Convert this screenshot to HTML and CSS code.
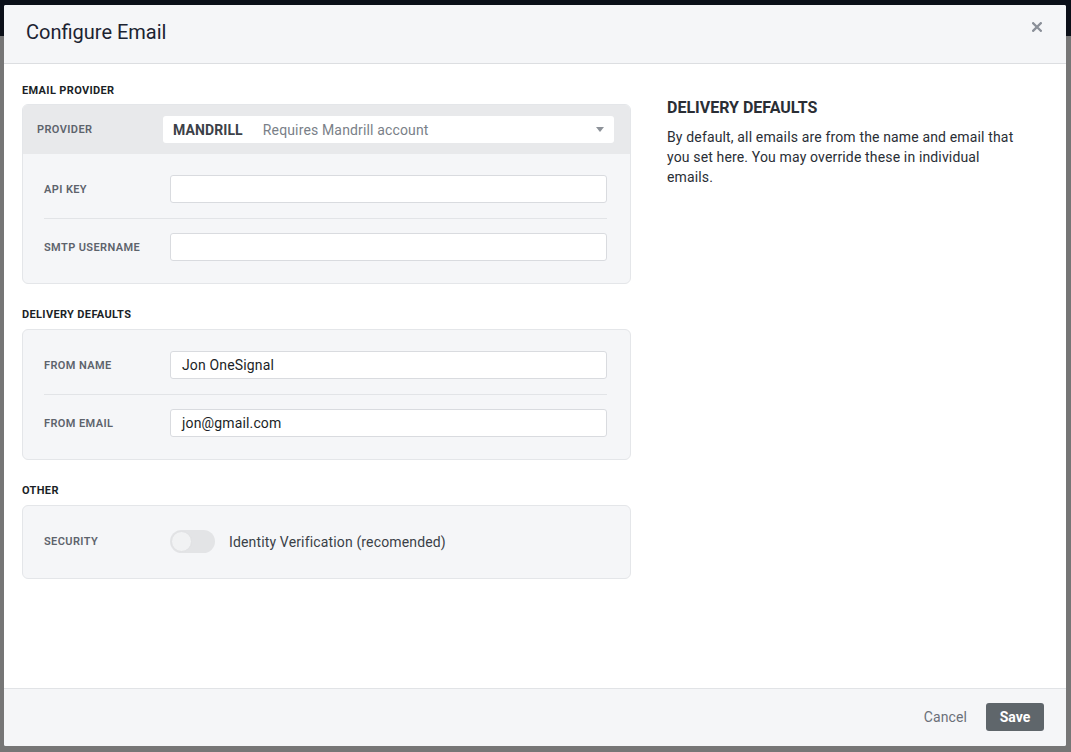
FILE: index.html
```html
<!DOCTYPE html>
<html>
<head>
<meta charset="utf-8">
<link rel="stylesheet" href="styles.css">
</head>
<body>
<div class="modal">
  <div class="modal-header">
    <h1 class="modal-title">Configure Email</h1>
    <button class="close" aria-label="Close">
      <svg width="10" height="10" viewBox="0 0 10 10"><path d="M1.2 1.2 L8.8 8.8 M8.8 1.2 L1.2 8.8" stroke="#8b9099" stroke-width="2.3" stroke-linecap="square"/></svg>
    </button>
  </div>
  <div class="modal-body">
    <div class="left-col">
      <div class="section-title">Email Provider</div>
      <div class="box">
        <div class="provider-row">
          <div class="label">Provider</div>
          <div class="select">
            <span class="select-main">MANDRILL</span>
            <span class="select-sub">Requires Mandrill account</span>
            <span class="caret"></span>
          </div>
        </div>
        <div class="rows">
          <div class="row">
            <div class="label">API Key</div>
            <div class="input"></div>
          </div>
          <div class="row">
            <div class="label">SMTP Username</div>
            <div class="input"></div>
          </div>
        </div>
      </div>

      <div class="section-title spaced">Delivery Defaults</div>
      <div class="box">
        <div class="rows">
          <div class="row">
            <div class="label">From Name</div>
            <div class="input">Jon OneSignal</div>
          </div>
          <div class="row">
            <div class="label">From Email</div>
            <div class="input">jon@gmail.com</div>
          </div>
        </div>
      </div>

      <div class="section-title spaced">Other</div>
      <div class="box">
        <div class="rows">
          <div class="row">
            <div class="label">Security</div>
            <div class="toggle-wrap">
              <span class="toggle"><span class="knob"></span></span>
              <span class="toggle-text">Identity Verification (recomended)</span>
            </div>
          </div>
        </div>
      </div>
    </div>
    <div class="right-col">
      <h2 class="side-title">DELIVERY DEFAULTS</h2>
      <p class="side-text">By default, all emails are from the name and email that you set here. You may override these in individual emails.</p>
    </div>
  </div>
  <div class="modal-footer">
    <button class="btn-cancel">Cancel</button>
    <button class="btn-save">Save</button>
  </div>
</div>
</body>
</html>
```

FILE: styles.css
```css
* { box-sizing: border-box; }
html, body { margin: 0; padding: 0; }
body {
  width: 1071px;
  height: 752px;
  overflow: hidden;
  font-family: Roboto, "Liberation Sans", sans-serif;
  background: linear-gradient(#0b1019 0, #0b1019 36px, #767676 36px);
}
.modal {
  margin: 5px 0 0 4px;
  width: 1062px;
  height: 741px;
  background: #ffffff;
  border-radius: 2px;
  display: flex;
  flex-direction: column;
  overflow: hidden;
}
.modal-header {
  height: 59px;
  flex: none;
  background: #f5f6f8;
  border-bottom: 1px solid #dcdee1;
  display: flex;
  align-items: center;
  justify-content: space-between;
  padding: 0 24px 4px 22px;
}
.modal-title {
  margin: 0;
  font-size: 20px;
  font-weight: 400;
  color: #1c2331;
}
.close {
  border: 0;
  background: none;
  padding: 0;
  margin: -10px 0 0 0;
  width: 10px;
  height: 10px;
  display: flex;
}
.modal-body {
  flex: 1;
  display: flex;
  padding: 20px 18px 0 18px;
}
.left-col {
  width: 609px;
  flex: none;
}
.section-title {
  font-size: 11px;
  line-height: 14px;
  font-weight: 700;
  letter-spacing: 0.35px;
  text-transform: uppercase;
  color: #1b1f27;
  margin-bottom: 6px;
}
.section-title.spaced { margin-top: 24px; margin-bottom: 7px; }
.box {
  background: #f5f6f8;
  border: 1px solid #e4e6e9;
  border-radius: 6px;
  overflow: hidden;
}
.provider-row {
  background: #e8e9eb;
  display: flex;
  align-items: center;
  padding: 11px 16px 11px 14px;
}
.label {
  width: 126px;
  flex: none;
  font-size: 11px;
  font-weight: 600;
  letter-spacing: 0.4px;
  text-transform: uppercase;
  color: #5d636c;
}
.select {
  flex: 1;
  height: 27px;
  background: #ffffff;
  border-radius: 3px;
  display: flex;
  align-items: center;
  padding: 0 10px;
  position: relative;
}
.select-main {
  font-size: 14px;
  font-weight: 700;
  letter-spacing: 0.1px;
  color: #3c4148;
  margin-right: 20px;
}
.select-sub {
  font-size: 14px;
  letter-spacing: 0.15px;
  color: #7a7f88;
}
.caret {
  position: absolute;
  right: 10px;
  top: 11px;
  width: 0;
  height: 0;
  border-left: 4.5px solid transparent;
  border-right: 4.5px solid transparent;
  border-top: 5px solid #8d9299;
}
.rows {
  padding: 7px 23px 7px 21px;
}
.row {
  display: flex;
  align-items: center;
  padding: 14px 0 15px 0;
}
.row + .row {
  border-top: 1px solid #e2e4e7;
}
.input {
  flex: 1;
  height: 28px;
  background: #ffffff;
  border: 1px solid #d9dbdf;
  border-radius: 3px;
  padding: 0 11px;
  font-size: 14px;
  letter-spacing: 0.15px;
  line-height: 26px;
  color: #1b1f27;
}
.toggle-wrap {
  display: flex;
  align-items: center;
  height: 29px;
}
.toggle {
  width: 45px;
  height: 23px;
  border-radius: 12px;
  background: #e3e4e6;
  display: flex;
  align-items: center;
  padding: 0 1px;
  margin-right: 14px;
}
.knob {
  width: 21px;
  height: 21px;
  border-radius: 50%;
  background: #f1f2f3;
  border: 1px solid #e0e1e3;
}
.toggle-text {
  font-size: 14px;
  letter-spacing: 0.15px;
  color: #3a3f47;
}
.right-col {
  margin-left: 36px;
  width: 350px;
}
.side-title {
  margin: 13px 0 0 0;
  font-size: 16px;
  line-height: 22px;
  font-weight: 700;
  color: #2a2e35;
}
.side-text {
  margin: 8px 0 0 0;
  font-size: 14px;
  line-height: 20px;
  letter-spacing: 0.15px;
  color: #2a2e35;
}
.modal-footer {
  height: 58px;
  flex: none;
  background: #f5f6f8;
  border-top: 1px solid #e1e3e6;
  display: flex;
  align-items: center;
  justify-content: flex-end;
  padding: 0 22px 1px 0;
}
.btn-cancel {
  border: 0;
  background: none;
  font-family: Roboto, "Liberation Sans", sans-serif;
  font-size: 14px;
  letter-spacing: 0.1px;
  color: #6b7079;
  padding: 0;
  margin-right: 19px;
}
.btn-save {
  border: 0;
  width: 58px;
  height: 28px;
  border-radius: 3px;
  background: #5f666b;
  color: #ffffff;
  font-family: Roboto, "Liberation Sans", sans-serif;
  font-size: 14px;
  font-weight: 700;
  padding: 0;
}
```
